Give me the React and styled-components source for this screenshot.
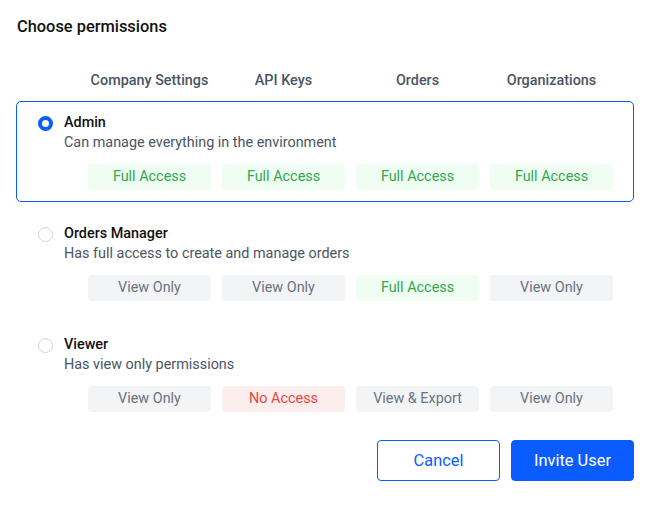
import styled, { createGlobalStyle } from "styled-components";

const GlobalStyle = createGlobalStyle`
  body {
    margin: 0;
    background: #ffffff;
    font-family: Roboto, "Liberation Sans", sans-serif;
    -webkit-font-smoothing: antialiased;
  }
`;

const BLUE = "#0b5cff";

const Page = styled.div`
  width: 618px;
  padding: 17px 0 24px 16px;
`;

const Title = styled.h2`
  margin: 0 0 0 1px;
  font-size: 16.4px;
  line-height: 20px;
  font-weight: 500;
  color: #111111;
`;

const Columns = styled.div`
  display: grid;
  grid-template-columns: repeat(4, 1fr);
  column-gap: 11px;
  margin: 34px 0 10px;
  padding: 0 21px 0 72px;
`;

const ColumnHead = styled.div`
  text-align: center;
  font-size: 14.4px;
  line-height: 20px;
  font-weight: 500;
  color: #4b5563;
`;

const RoleList = styled.div`
  display: flex;
  flex-direction: column;
  gap: 10px;
`;

const RoleCard = styled.div`
  display: grid;
  grid-template-columns: 15px 1fr;
  column-gap: 11px;
  padding: 11px 20px 11px 21px;
  border: 1px solid ${(p) => (p.$selected ? BLUE : "transparent")};
  border-radius: 5px;
  cursor: pointer;
`;

const Radio = styled.span`
  box-sizing: border-box;
  width: 15px;
  height: 15px;
  margin-top: 2.5px;
  border-radius: 50%;
  border: ${(p) => (p.$checked ? `4.5px solid ${BLUE}` : "1px solid #d1d5db")};
  background: #ffffff;
`;

const RoleName = styled.div`
  font-size: 14.4px;
  line-height: 20px;
  font-weight: 500;
  color: #111111;
`;

const RoleDesc = styled.div`
  font-size: 14.4px;
  line-height: 20px;
  color: #4b5563;
`;

const Pills = styled.div`
  grid-column: 2;
  display: grid;
  grid-template-columns: repeat(4, 1fr);
  column-gap: 11px;
  margin: 11px 0 0 24px;
`;

const pillColors = {
  full: { bg: "#effdf3", fg: "#2fa84f" },
  none: { bg: "#fdeeee", fg: "#ef4444" },
  view: { bg: "#f3f4f6", fg: "#6b7280" },
};

const Pill = styled.div`
  height: 26px;
  line-height: 26px;
  border-radius: 4px;
  text-align: center;
  font-size: 14.4px;
  background: ${(p) => pillColors[p.$kind].bg};
  color: ${(p) => pillColors[p.$kind].fg};
`;

const Actions = styled.div`
  display: flex;
  justify-content: flex-end;
  gap: 11px;
  margin-top: 16px;
`;

const Button = styled.button`
  box-sizing: border-box;
  width: 123px;
  height: 41px;
  border-radius: 4px;
  font-family: inherit;
  font-size: 16.4px;
  cursor: pointer;
  border: 1px solid ${BLUE};
  background: ${(p) => (p.$primary ? BLUE : "#ffffff")};
  color: ${(p) => (p.$primary ? "#ffffff" : BLUE)};
`;

const columns = ["Company Settings", "API Keys", "Orders", "Organizations"];

const roles = [
  {
    name: "Admin",
    desc: "Can manage everything in the environment",
    perms: [
      ["full", "Full Access"],
      ["full", "Full Access"],
      ["full", "Full Access"],
      ["full", "Full Access"],
    ],
  },
  {
    name: "Orders Manager",
    desc: "Has full access to create and manage orders",
    perms: [
      ["view", "View Only"],
      ["view", "View Only"],
      ["full", "Full Access"],
      ["view", "View Only"],
    ],
  },
  {
    name: "Viewer",
    desc: "Has view only permissions",
    perms: [
      ["view", "View Only"],
      ["none", "No Access"],
      ["view", "View & Export"],
      ["view", "View Only"],
    ],
  },
];

export default function App() {
  const selected = "Admin";

  return (
    <>
      <GlobalStyle />
      <Page>
        <Title>Choose permissions</Title>
        <Columns>
          {columns.map((c) => (
            <ColumnHead key={c}>{c}</ColumnHead>
          ))}
        </Columns>
        <RoleList>
          {roles.map((role) => (
            <RoleCard key={role.name} $selected={role.name === selected}>
              <Radio $checked={role.name === selected} />
              <div>
                <RoleName>{role.name}</RoleName>
                <RoleDesc>{role.desc}</RoleDesc>
              </div>
              <Pills>
                {role.perms.map(([kind, label], i) => (
                  <Pill key={i} $kind={kind}>
                    {label}
                  </Pill>
                ))}
              </Pills>
            </RoleCard>
          ))}
        </RoleList>
        <Actions>
          <Button>Cancel</Button>
          <Button $primary>Invite User</Button>
        </Actions>
      </Page>
    </>
  );
}
